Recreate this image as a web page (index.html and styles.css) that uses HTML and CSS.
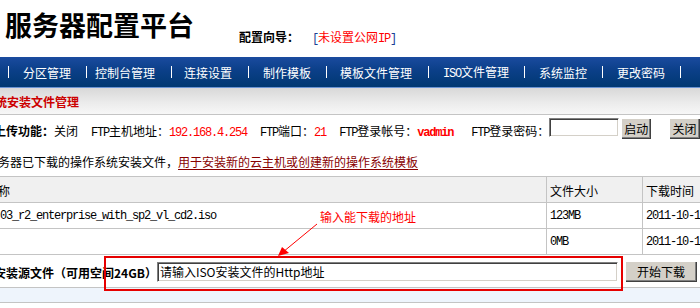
FILE: index.html
```html
<!DOCTYPE html>
<html lang="zh-CN">
<head>
<meta charset="utf-8">
<title>服务器配置平台</title>
<link rel="stylesheet" href="styles.css">
</head>
<body>
<div class="header">
  <div class="title">服务器配置平台</div>
  <div class="guide"><b>配置向导：</b><span class="br">[</span><span class="red">未设置公网<span class="m">IP</span></span><span class="br">]</span></div>
</div>
<div class="nav">
  <span class="pipe"></span><span class="item w4">分区管理</span>
  <span class="pipe"></span><span class="item w5 n2">控制台管理</span>
  <span class="pipe"></span><span class="item w4 n3">连接设置</span>
  <span class="pipe"></span><span class="item w4">制作模板</span>
  <span class="pipe"></span><span class="item w6 n5">模板文件管理</span>
  <span class="pipe"></span><span class="item wiso"><span class="m">ISO</span>文件管理</span>
  <span class="pipe"></span><span class="item w4">系统监控</span>
  <span class="pipe"></span><span class="item w4">更改密码</span>
  <span class="pipe"></span>
</div>
<div class="section-title"><span class="st-text">统安装文件管理</span></div>
<div class="ftp-row">
  <span class="t first"><b>上传功能：</b>关闭</span>
  <span class="t gap"><span class="m">FTP</span>主机地址：<span class="m red">192.168.4.254</span></span>
  <span class="t gap"><span class="m">FTP</span>端口：<span class="m red">21</span></span>
  <span class="t gap"><span class="m">FTP</span>登录帐号：<span class="m red bold">vadmin</span></span>
  <span class="t gap2"><span class="m">FTP</span>登录密码：</span>
  <input class="pwd" type="text" value="">
  <button class="btn b-start">启动</button>
  <button class="btn b-close">关闭</button>
</div>
<div class="desc"><span class="d-first">务器已下载的操作系统安装文件，</span><a class="link" href="#">用于安装新的云主机或创建新的操作系统模板</a></div>
<div class="grid">
  <div class="row head">
    <div class="c c1"><span class="neg2">称</span></div>
    <div class="c c2">文件大小</div>
    <div class="c c3">下载时间</div>
  </div>
  <div class="row">
    <div class="c c1"><span class="m">03_r2_enterprise_with_sp2_vl_cd2.iso</span></div>
    <div class="c c2"><span class="m">123MB</span></div>
    <div class="c c3"><span class="m">2011-10-14 10:23:45</span></div>
  </div>
  <div class="row">
    <div class="c c1"></div>
    <div class="c c2"><span class="m">0MB</span></div>
    <div class="c c3"><span class="m">2011-10-14 10:25:12</span></div>
  </div>
  <div class="row dl">
    <span class="dl-label">安装源文件（可用空间24GB）</span>
    <input class="url" type="text" value="请输入ISO安装文件的Http地址">
    <button class="btn b-dl">开始下载</button>
  </div>
  <div class="row foot"></div>
</div>
<div class="mark-box"></div>
<div class="mark-text">输入能下载的地址</div>
<svg class="mark-arrow" width="60" height="44" viewBox="0 0 60 44">
  <line x1="47" y1="2" x2="13" y2="30" stroke="#ff0000" stroke-width="1"/>
  <polygon points="8,34 12,25 19,31" fill="#ff0000"/>
</svg>
</body>
</html>
```
FILE: styles.css
```css
html, body {
  margin: 0;
  padding: 0;
}
body {
  position: relative;
  width: 700px;
  height: 308px;
  overflow: hidden;
  background: #ffffff;
  font-family: "Noto Sans CJK SC", "Liberation Sans", sans-serif;
  font-size: 12px;
  color: #000000;
}
.header {
  height: 57px;
  display: flex;
  align-items: flex-start;
}
.title {
  margin-left: 5px;
  padding-top: 10px;
  font-size: 27px;
  line-height: 30px;
  font-weight: bold;
}
.guide {
  margin-left: 45px;
  padding-top: 29px;
  line-height: 16px;
  white-space: nowrap;
}
.guide b {
  margin-right: 13px;
}
.br {
  color: #1c3f94;
  font-family: "Liberation Mono", monospace;
  letter-spacing: -1.2px;
}
.red {
  color: #ff0000;
}
.bold {
  font-weight: bold;
}
.m {
  font-family: "Liberation Mono", monospace;
  letter-spacing: -1.2px;
}
.nav {
  height: 30px;
  border-bottom: 1px solid #6a94d4;
  background: linear-gradient(#1a4b9f 0%, #0b3f88 45%, #003872 100%);
  display: flex;
  align-items: center;
  padding-left: 8px;
  color: #ffffff;
  white-space: nowrap;
}
.pipe {
  width: 1px;
  height: 12px;
  background: #ffffff;
  flex: none;
}
.item {
  flex: none;
  margin-left: 14px;
  margin-right: 15px;
  line-height: 16px;
  padding-top: 1px;
}
.n2 { margin-left: 8px; margin-right: 16px; }
.n3 { margin-left: 12px; margin-right: 16px; }
.n5 { margin-left: 13px; margin-right: 16px; }
.w4 { width: 48px; }
.w5 { width: 60px; }
.w6 { width: 72px; }
.wiso { width: 66px; }
.section-title {
  height: 26px;
  border-bottom: 1px solid #c4c4c4;
  background: linear-gradient(#d8d8d8 0%, #ebebeb 55%, #f7f7f7 100%);
  display: flex;
  align-items: center;
}
.st-text {
  margin-left: -5px;
  color: #cc0000;
  font-weight: bold;
  line-height: 16px;
  padding-top: 1px;
}
.ftp-row {
  height: 26px;
  padding-top: 3px;
  box-sizing: border-box;
  display: flex;
  align-items: flex-start;
  white-space: nowrap;
}
.t {
  line-height: 16px;
  padding-top: 5px;
}
.first {
  margin-left: -6px;
}
.gap {
  margin-left: 13px;
}
.gap2 {
  margin-left: 18px;
}
.pwd {
  width: 70px;
  height: 19px;
  box-sizing: border-box;
  margin: 0;
  padding: 0 2px;
  border: 1px solid;
  border-color: #808080 #ffffff #ffffff #808080;
  box-shadow: inset 1px 1px 0 #404040, inset -1px -1px 0 #d4d0c8;
  background: #ffffff;
  font: inherit;
  outline: none;
}
.btn {
  height: 21px;
  box-sizing: border-box;
  padding: 0;
  margin: 0;
  border: none;
  background: #d4d0c8;
  box-shadow: inset 1px 1px 0 #ffffff, inset -1px -1px 0 #404040, inset -2px -2px 0 #808080;
  font-family: "Noto Sans CJK SC", sans-serif;
  font-size: 12px;
  color: #000000;
  line-height: 19px;
}
.b-start {
  width: 35px;
  margin-left: 2px;
}
.b-close {
  width: 36px;
  margin-left: 18px;
}
.desc {
  margin-top: 13px;
  line-height: 16px;
  white-space: nowrap;
}
.d-first {
  margin-left: -2px;
}
.link {
  color: #880000;
  text-decoration: underline;
  text-underline-offset: 2px;
}
.grid {
  margin-top: 6px;
  width: 820px;
  border-top: 1px solid #c4c4c4;
}
.row {
  display: grid;
  grid-template-columns: 547px 96px 1fr;
  height: 26px;
  border-bottom: 1px solid #c4c4c4;
  box-sizing: border-box;
}
.head {
  background: #f0f0f0;
}
.c {
  display: flex;
  align-items: center;
  white-space: nowrap;
  padding-top: 1px;
}
.c1, .c2 {
  border-right: 1px solid #c4c4c4;
}
.c2, .c3 {
  padding-left: 3px;
}
.neg2 {
  margin-left: -2px;
}
.dl {
  display: flex;
  align-items: center;
  height: 33px;
  padding-top: 1px;
}
.dl-label {
  margin-left: -6px;
  font-weight: bold;
  white-space: nowrap;
  line-height: 16px;
  padding-top: 3px;
}
.url {
  width: 461px;
  height: 20px;
  box-sizing: border-box;
  margin: 0;
  padding: 0 2px;
  border: 1px solid;
  border-color: #808080 #ffffff #ffffff #808080;
  box-shadow: inset 1px 1px 0 #404040, inset -1px -1px 0 #d4d0c8;
  background: #ffffff;
  font-family: "Noto Sans CJK SC", sans-serif;
  font-size: 12px;
  color: #000000;
  outline: none;
}
.b-dl {
  width: 72px;
  margin-left: 7px;
}
.foot {
  height: 15px;
  background: #eef4fc;
}
.mark-box {
  position: absolute;
  left: 104px;
  top: 256px;
  width: 519px;
  height: 35px;
  box-sizing: border-box;
  border: 2px solid #e60000;
}
.mark-text {
  position: absolute;
  left: 320px;
  top: 209px;
  line-height: 16px;
  color: #ff0000;
  white-space: nowrap;
}
.mark-arrow {
  position: absolute;
  left: 270px;
  top: 222px;
}
```
